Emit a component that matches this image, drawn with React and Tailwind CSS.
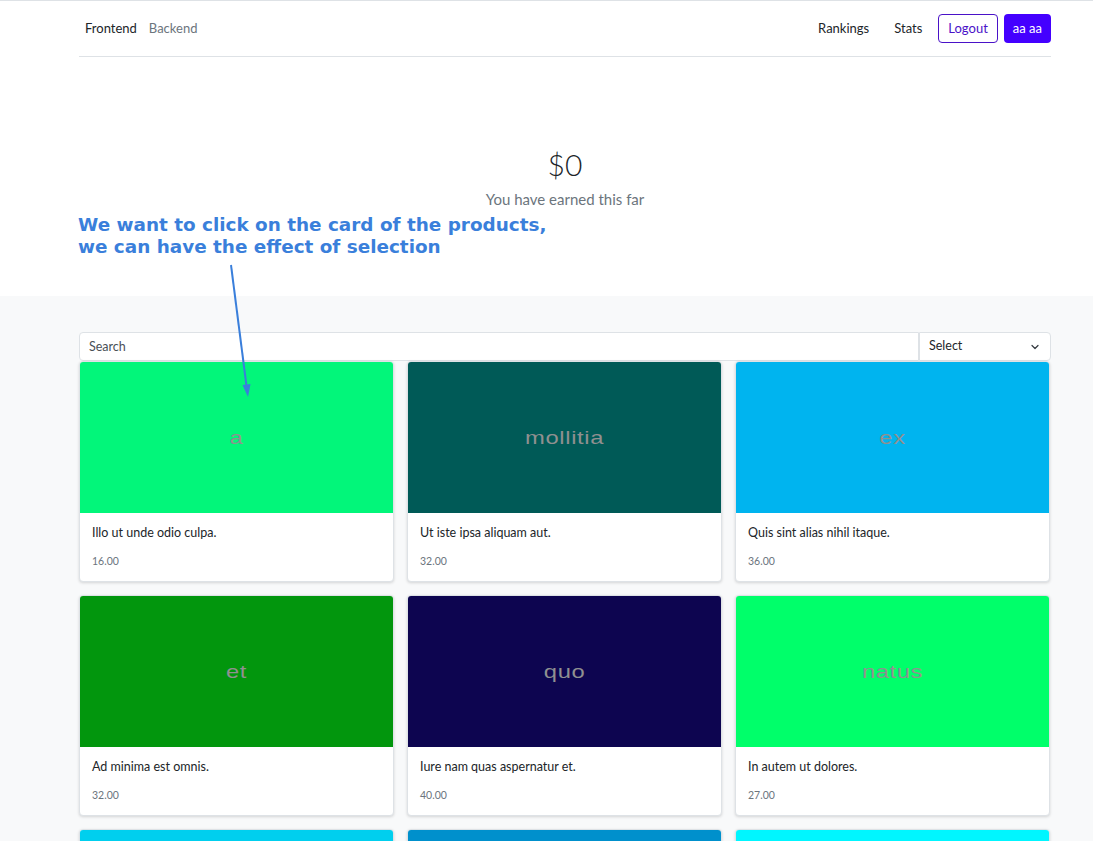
import React from "react";

const products = [
  { img: "a", title: "Illo ut unde odio culpa.", price: "16.00", color: "bg-[#02f67a]" },
  { img: "mollitia", title: "Ut iste ipsa aliquam aut.", price: "32.00", color: "bg-[#005a57]" },
  { img: "ex", title: "Quis sint alias nihil itaque.", price: "36.00", color: "bg-[#00b4ef]" },
  { img: "et", title: "Ad minima est omnis.", price: "32.00", color: "bg-[#02960d]" },
  { img: "quo", title: "Iure nam quas aspernatur et.", price: "40.00", color: "bg-[#0d0550]" },
  { img: "natus", title: "In autem ut dolores.", price: "27.00", color: "bg-[#00ff6a]" },
  { img: "sit", title: "Dolor sit amet.", price: "12.00", color: "bg-[#00cfee]" },
  { img: "rem", title: "Rem quia est.", price: "21.00", color: "bg-[#0090cc]" },
  { img: "vel", title: "Vel eum dolores.", price: "18.00", color: "bg-[#00f6ff]" },
];

function Header() {
  return (
    <div className="border-t border-[#dee2e6]">
      <div className="ml-[79px] w-[972px] h-[56px] flex items-center justify-between border-b border-[#dee2e6] text-[13px]">
        <div className="flex items-center gap-[12px] pl-[6px]">
          <span className="text-[#212529]">Frontend</span>
          <span className="text-[#6c757d]">Backend</span>
        </div>
        <div className="flex items-center">
          <span className="text-[#212529] mr-[25px]">Rankings</span>
          <span className="text-[#212529] mr-[16px]">Stats</span>
          <button className="h-[29px] px-[9px] border border-[#4a12c8] text-[#4a12c8] rounded-[4px] mr-[6px]">
            Logout
          </button>
          <button className="h-[29px] px-[9px] bg-[#4400ff] text-white rounded-[4px]">
            aa aa
          </button>
        </div>
      </div>
    </div>
  );
}

function Card({ p }) {
  return (
    <div className="bg-white rounded-[4px] border border-[#dee2e6] shadow-[0_1px_3px_rgba(0,0,0,0.15)] overflow-hidden cursor-pointer">
      <div className={`${p.color} h-[151px] flex items-center justify-center`}>
        <span className="inline-block scale-x-125 text-[#909090] text-[19px] tracking-[0.5px] leading-none [font-family:'Liberation_Sans',Arial,sans-serif]">
          {p.img}
        </span>
      </div>
      <div className="px-[12px] pt-[12px] pb-[13px]">
        <div className="text-[12.5px] text-[#212529] leading-[16px]">{p.title}</div>
        <div className="text-[10.5px] text-[#6c757d] mt-[13px] leading-[14px]">{p.price}</div>
      </div>
    </div>
  );
}

export default function App() {
  return (
    <div className="relative min-h-screen bg-[#f8f9fa] [font-family:Lato,'Noto_Sans',sans-serif] overflow-hidden">
      <div className="bg-white">
        <Header />
        <div className="h-[239px] flex flex-col items-center pt-[89px] pl-[37px]">
          <div className="text-[30px] font-light text-[#212529] leading-[36px]">$0</div>
          <div className="text-[15px] text-[#6c757d] mt-[6px]">You have earned this far</div>
        </div>
      </div>

      <div className="ml-[79px] w-[972px] pt-[36px]">
        <div className="flex">
          <input
            placeholder="Search"
            className="flex-1 h-[29px] px-[9px] text-[12.5px] bg-white border border-[#dee2e6] rounded-l-[4px] outline-none placeholder:text-[#495057]"
          />
          <div className="w-[132px] h-[29px] px-[9px] flex items-center justify-between bg-white border border-[#dee2e6] rounded-r-[4px] text-[12.5px] text-[#212529]">
            <span>Select</span>
            <svg width="12" height="12" viewBox="0 0 16 16" fill="none" stroke="#343a40" strokeWidth="1.6" strokeLinecap="round" strokeLinejoin="round">
              <path d="M4 6l4 4 4-4" />
            </svg>
          </div>
        </div>
        <div className="grid grid-cols-3 gap-x-[13px] gap-y-[13px] pr-[1px]">
          {products.map((p, i) => (
            <Card key={i} p={p} />
          ))}
        </div>
      </div>

      {/* annotation overlay */}
      <div className="absolute left-[78px] top-[214px] text-[#3a7fdb] font-bold text-[18.4px] leading-[22px] [font-family:'DejaVu_Sans',sans-serif]">
        <div>We want to click on the card of the products,</div>
        <div>we can have the effect of selection</div>
      </div>
      <svg className="absolute left-0 top-0 pointer-events-none" width="1093" height="841">
        <line x1="231" y1="265" x2="247" y2="390" stroke="#3a7fdb" strokeWidth="2" />
        <path d="M242.5 385 L248 397 L250.5 384 Z" fill="#3a7fdb" />
      </svg>
    </div>
  );
}
